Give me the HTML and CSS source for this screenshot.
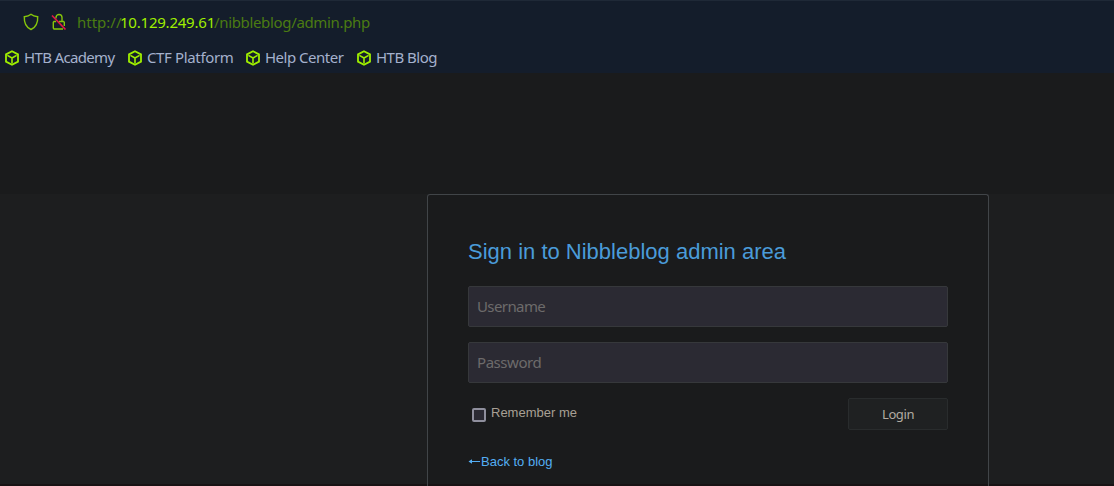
FILE: index.html
```
<!DOCTYPE html>
<html lang="en">
<head>
<meta charset="utf-8">
<title>Nibbleblog admin</title>
<link rel="stylesheet" href="styles.css">
</head>
<body>
<svg class="defs" width="0" height="0" aria-hidden="true">
  <symbol id="cube" viewBox="0 0 14 16">
    <path d="M7 1.2 13 4.4V11.6L7 14.8 1 11.6V4.4Z"/>
    <path stroke-width="1.6" d="M2.4 5.4 7 8 11.6 5.4M7 8V13.5"/>
  </symbol>
</svg>
<header class="browser">
  <div class="address">
    <svg class="shield" viewBox="0 0 16 18"><path d="M8 1.3C9.6 2.6 12.2 3.4 14.7 3.7C15 10 12.8 14.3 8 16.5C3.2 14.3 1 10 1.3 3.7C3.8 3.4 6.4 2.6 8 1.3Z"/></svg>
    <svg class="lock" viewBox="0 0 16 18"><path d="M5 5.5V4.6C5 .4 11 .4 11 4.6V8.5M8 8.5H12.5L13.3 9.3V13M12 16H3L2.3 15V9.3L3 8.5H5"/><path class="slash" d="M1 2.5 14.5 16.5"/></svg>
    <div class="url"><span class="scheme">http://</span><span class="host">10.129.249.61</span><span class="path">/nibbleblog/admin.php</span></div>
  </div>
  <nav class="bookmarks">
    <a class="bookmark academy"><svg class="cube"><use href="#cube"/></svg><span>HTB Academy</span></a>
    <a class="bookmark platform"><svg class="cube"><use href="#cube"/></svg><span>CTF Platform</span></a>
    <a class="bookmark help"><svg class="cube"><use href="#cube"/></svg><span>Help Center</span></a>
    <a class="bookmark blog"><svg class="cube"><use href="#cube"/></svg><span>HTB Blog</span></a>
  </nav>
</header>
<div class="banner"></div>
<main class="page">
  <form class="card">
    <h1 class="title">Sign in to Nibbleblog admin area</h1>
    <input class="field username" type="text" placeholder="Username">
    <input class="field password" type="password" placeholder="Password">
    <div class="actions">
      <label class="remember"><input class="check" type="checkbox"><span>Remember me</span></label>
      <button class="login" type="button">Login</button>
    </div>
    <a class="back"><svg class="arrow" viewBox="0 0 12 8"><path d="M12 3.5H1.5"/><path class="head" d="M.5 3.5 4 1.2V5.8Z"/></svg><span>Back to blog</span></a>
  </form>
</main>
<div class="edge"><div class="edge-card"></div></div>
</body>
</html>
```
FILE: styles.css
```
* { box-sizing: border-box; }
body {
  margin: 0;
  height: 486px;
  overflow: hidden;
  display: flex;
  flex-direction: column;
  background: #1d1e1f;
  font-family: "Liberation Sans", Arial, sans-serif;
}
svg { display: block; flex: none; fill: none; }
.defs { position: absolute; }
.browser {
  height: 73px;
  flex: none;
  background: #141d2b;
  border-top: 1px solid #1f2937;
  font: 15px "Noto Sans", sans-serif;
}
.address { height: 43px; display: flex; align-items: center; padding-left: 23px; }
.shield, .lock { width: 16px; height: 18px; stroke: #86c60b; stroke-width: 1.4; }
.shield, .lock { margin-bottom: 1px; }
.lock { margin-left: 12px; }
.lock .slash { stroke: #e31846; stroke-width: 1.7; }
.url { margin: 0 0 2px 10px; color: #4b7b12; white-space: nowrap; display: flex; }
.scheme { width: 43px; }
.host { width: 94px; color: #9fef00; letter-spacing: -.22px; }
.path { letter-spacing: -.34px; }
.bookmarks { height: 28px; display: flex; align-items: center; padding-left: 5px; color: #a4b1cd; }
.bookmark { display: flex; align-items: center; gap: 5px; white-space: nowrap; }
.bookmark span { margin-bottom: 2px; letter-spacing: -.5px; }
.cube { width: 14px; height: 16px; stroke: #9fef00; stroke-width: 1.8; }
.academy { width: 123px; }
.bookmark.academy span { letter-spacing: -.66px; }
.platform { width: 118px; }
.bookmark.platform span { letter-spacing: -.36px; }
.help { width: 111px; }
.banner { height: 121px; flex: none; background: #1a1b1c; }
.page { height: 290px; padding-left: 427px; }
.card {
  width: 562px;
  height: 290px;
  margin: 0;
  padding: 44px 40px 0;
  background: #1a1b1c;
  border: 1px solid #414548;
  border-bottom: 0;
  border-radius: 3px 3px 0 0;
}
.title { margin: 0 0 21px; height: 26px; font-size: 22px; line-height: 26px; font-weight: 400; color: #4a9bd9; white-space: nowrap; }
.field {
  display: block;
  width: 480px;
  height: 41px;
  margin: 0 0 15px;
  padding: 0 8px 2px;
  background: #2b2a33;
  border: 1px solid #36383b;
  border-radius: 2px;
  font: 15px "Noto Sans", sans-serif;
  letter-spacing: -.6px;
}
.password { letter-spacing: -.45px; }
.field::placeholder { color: #6d6b6b; opacity: 1; }
.actions { display: flex; justify-content: space-between; height: 32px; }
.remember { display: flex; align-items: flex-start; padding-left: 4px; font-size: 13px; line-height: 15px; color: #a8a095; }
.remember span { margin: 7px 0 0 5px; }
.check { appearance: none; width: 14px; height: 14px; margin: 10px 0 0; border: 2px solid #8f8f9d; border-radius: 2px; background: #2b2a33; }
.login { width: 100px; height: 32px; padding: 0; border: 1px solid #292c2d; border-radius: 2px; background: #1f2122; color: #b2aca2; font: 13px "Noto Sans", sans-serif; letter-spacing: -.4px; }
.back { display: flex; align-items: center; margin-top: 24px; height: 15px; color: #54aef3; font-size: 13px; line-height: 15px; }
.arrow { width: 12px; height: 8px; margin-right: 1px; stroke: #54aef3; }
.arrow .head { fill: #54aef3; stroke: none; }
.edge { height: 2px; flex: none; padding-left: 427px; background: #181314; }
.edge-card { width: 562px; height: 2px; border: solid #414548; border-width: 0 1px; }
```
